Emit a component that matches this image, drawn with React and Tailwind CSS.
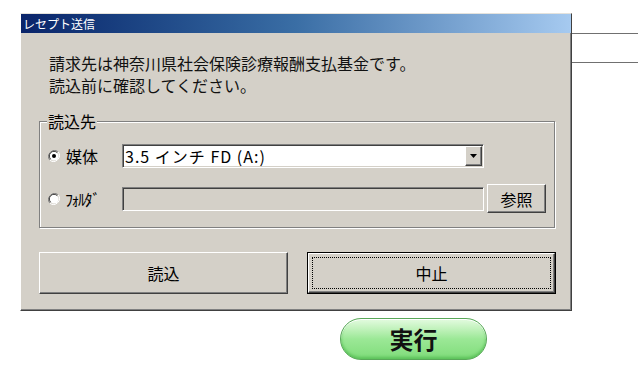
import React from "react";

const FONT = { fontFamily: '"Noto Sans CJK JP", "Noto Sans", sans-serif' };

function Radio({ checked }) {
  return (
    <svg width="12" height="12" viewBox="0 0 12 12" className="shrink-0">
      <path d="M10.2 1.8 A6 6 0 0 0 1.8 10.2" fill="none" stroke="#808080" strokeWidth="1" />
      <path d="M1.8 10.2 A6 6 0 0 0 10.2 1.8" fill="none" stroke="#ffffff" strokeWidth="1" />
      <circle cx="6" cy="6" r="4.6" fill="#ffffff" />
      <path d="M9.3 2.7 A4.6 4.6 0 0 0 2.7 9.3" fill="none" stroke="#404040" strokeWidth="1" />
      {checked && <circle cx="6" cy="6" r="2" fill="#000" />}
    </svg>
  );
}

const sunken =
  "border border-t-[#808080] border-l-[#808080] border-b-white border-r-white shadow-[inset_1px_1px_0_#404040,inset_-1px_-1px_0_#d4d0c8]";
const raised =
  "border border-t-white border-l-white border-b-[#404040] border-r-[#404040] shadow-[inset_-1px_-1px_0_#808080]";

export default function App() {
  return (
    <div className="w-[638px] h-[370px] bg-white overflow-hidden text-black" style={FONT}>
      <div className="flex items-start pt-[13px] pl-[20px]">
        {/* Dialog */}
        <div className="w-[552px] h-[298px] flex flex-col bg-[#d4d0c8] border border-t-[#e4e2dc] border-l-white border-r-[#404040] border-b-[#404040] shadow-[inset_-1px_-1px_0_#808080]">
          <div className="h-[19px] flex items-center pl-[2px] bg-linear-to-r from-[#0a246a] via-[#3a6ea5] to-[#a6caf0] text-white text-[12px] leading-none">
            レセプト送信
          </div>
          <div className="pl-[28px] pt-[19px] text-[16px] leading-[22px] text-[#111]">
            <div>請求先は神奈川県社会保険診療報酬支払基金です。</div>
            <div>読込前に確認してください。</div>
          </div>

          {/* Group box */}
          <div className="relative ml-[18px] mt-[25px] w-[516px] h-[107px] border border-[#808080] shadow-[inset_1px_1px_0_#ffffff,1px_1px_0_#ffffff]">
            <div className="absolute -top-[11px] left-[7px] px-[1px] bg-[#d4d0c8] text-[16px] leading-[20px]">
              読込先
            </div>
            <div className="flex items-center mt-[22px] h-[24px] pl-[8px]">
              <div className="w-[74px] flex items-center">
                <Radio checked />
                <span className="ml-[6px] text-[16px] leading-none">媒体</span>
              </div>
              <div className={`w-[362px] h-[24px] flex items-center bg-white ${sunken}`}>
                <span className="flex-1 pl-[2px] text-[16px] leading-none whitespace-pre tracking-[1px]">3.5 インチ FD (A:)</span>
                <div className={`w-[17px] h-[20px] mr-[1px] flex items-center justify-center bg-[#d4d0c8] ${raised}`}>
                  <svg width="7" height="4" viewBox="0 0 7 4"><path d="M0 0h7L3.5 4z" fill="#000" /></svg>
                </div>
              </div>
            </div>
            <div className="flex items-center mt-[16px] h-[29px] pl-[8px]">
              <div className="w-[74px] flex items-center">
                <Radio />
                <span className="ml-[5px] text-[16px] leading-none tracking-[-1.5px]">ﾌｫﾙﾀﾞ</span>
              </div>
              <div className={`w-[362px] h-[24px] bg-[#d4d0c8] ${sunken}`} />
              <div className={`ml-[3px] w-[59px] h-[29px] flex items-center justify-center text-[16px] leading-none ${raised}`}>
                参照
              </div>
            </div>
          </div>

          {/* Buttons */}
          <div className="flex gap-[19px] ml-[18px] mt-[24px]">
            <div className={`w-[249px] h-[42px] flex items-center justify-center text-[16px] leading-none ${raised}`}>
              読込
            </div>
            <div className="w-[249px] h-[42px] border border-black p-0">
              <div className={`w-full h-full p-[3px] ${raised}`}>
                <div className="w-full h-full border border-dotted border-black flex items-center justify-center text-[16px] leading-none">
                  中止
                </div>
              </div>
            </div>
          </div>
        </div>

        {/* Lines to right */}
        <div className="flex-1">
          <div className="mt-[20px] h-px bg-[#707070]" />
          <div className="mt-[28px] h-px bg-[#707070]" />
        </div>
      </div>

      {/* 実行 button */}
      <div className="ml-[340px] mt-[7px] w-[147px] h-[42px] rounded-full border border-[#58a858] bg-linear-to-b from-[#e4fbe0] via-[#9be896] to-[#7fdc7a] shadow-[inset_0_1px_0_#ffffff,inset_0_-2px_3px_#5cc25a] flex items-center justify-center">
        <span className="text-[24px] font-bold leading-none text-[#111]">実行</span>
      </div>
    </div>
  );
}
